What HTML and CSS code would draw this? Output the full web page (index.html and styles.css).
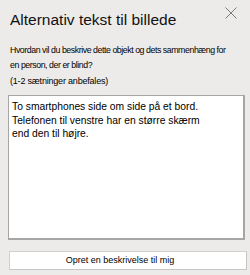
FILE: index.html
```html
<!DOCTYPE html>
<html lang="da">
<head>
<meta charset="utf-8">
<link rel="stylesheet" href="styles.css">
</head>
<body>
<div class="pane">
  <div class="head">
    <h1 class="title">Alternativ tekst til billede</h1>
    <span class="close" aria-label="Luk">
      <svg width="12" height="12" viewBox="0 0 12 12"><path d="M0.5 0.5 L11.5 11.5 M11.5 0.5 L0.5 11.5" stroke="#7a7a7a" stroke-width="1" fill="none"/></svg>
    </span>
  </div>
  <p class="desc">Hvordan vil du beskrive dette objekt og dets sammenhæng for en person, der er blind?</p>
  <p class="hint">(1-2 sætninger anbefales)</p>
  <div class="box">To smartphones side om side på et bord. Telefonen til venstre har en større skærm end den til højre.</div>
  <div class="btn">Opret en beskrivelse til mig</div>
</div>
</body>
</html>
```
FILE: styles.css
```css
html, body { margin: 0; padding: 0; }
body { background: #edebe9; width: 250px; height: 275px; overflow: hidden; font-family: "Liberation Sans", Arial, sans-serif; color: #000; }
.pane { display: flex; flex-direction: column; padding: 6px 3px 0 8px; }
.head { display: flex; justify-content: space-between; align-items: flex-start; }
.title { margin: 4px 0 0 2px; font-size: 15.5px; font-weight: normal; line-height: 20px; color: #111; }
.close { margin: 1px 10px 0 0; display: flex; }
.desc { margin: 13px 0 0 2px; font-size: 8.8px; letter-spacing: -0.45px; line-height: 15px; width: 222px; }
.hint { margin: 3px 0 0 2px; font-size: 9px; letter-spacing: -0.2px; line-height: 11px; }
.box { margin-top: 8px; height: 145px; background: #fff; border: 1px solid #a6a6a6; border-right-width: 2px; border-bottom-width: 2px; padding: 4px 30px 4px 3px; box-sizing: border-box; font-size: 10.3px; line-height: 13.5px; width: 237px; }
.btn { margin: 11px 0 0 1px; width: 238px; height: 19px; box-sizing: border-box; background: #fff; border: 1px solid #d2d0ce; border-right-color: #c8c6c4; border-bottom-color: #c8c6c4; font-size: 9px; line-height: 17px; text-align: center; padding-right: 16px; }
```
